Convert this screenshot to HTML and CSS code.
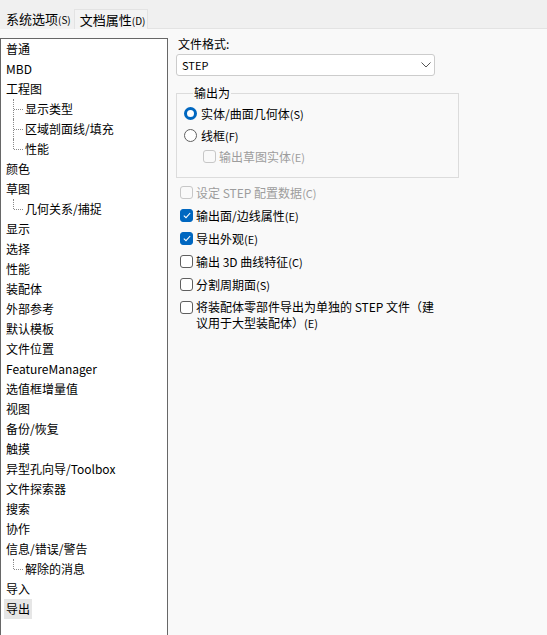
FILE: index.html
```html
<!DOCTYPE html>
<html lang="zh-CN">
<head>
<meta charset="utf-8">
<title>系统选项</title>
<link rel="stylesheet" href="styles.css">
</head>
<body>
<div class="window">
  <div class="tabbar">
    <div class="tab tab-active">系统选项<span class="acc">(S)</span></div>
    <div class="tab">文档属性<span class="acc">(D)</span></div>
  </div>
  <div class="main">
    <div class="tree">
      <div class="item">普通</div>
      <div class="item">MBD</div>
      <div class="item">工程图</div>
      <div class="item child">显示类型</div>
      <div class="item child">区域剖面线/填充</div>
      <div class="item child last">性能</div>
      <div class="item">颜色</div>
      <div class="item">草图</div>
      <div class="item child last">几何关系/捕捉</div>
      <div class="item">显示</div>
      <div class="item">选择</div>
      <div class="item">性能</div>
      <div class="item">装配体</div>
      <div class="item">外部参考</div>
      <div class="item">默认模板</div>
      <div class="item">文件位置</div>
      <div class="item">FeatureManager</div>
      <div class="item">选值框增量值</div>
      <div class="item">视图</div>
      <div class="item">备份/恢复</div>
      <div class="item">触摸</div>
      <div class="item">异型孔向导/Toolbox</div>
      <div class="item">文件探索器</div>
      <div class="item">搜索</div>
      <div class="item">协作</div>
      <div class="item">信息/错误/警告</div>
      <div class="item child last">解除的消息</div>
      <div class="item">导入</div>
      <div class="item"><span class="selected">导出</span></div>
    </div>
    <div class="panel">
      <div class="label">文件格式:</div>
      <div class="select">
        <span>STEP</span>
        <svg class="chev" width="10" height="6" viewBox="0 0 10 6"><path d="M0.5 0.5 L5 5 L9.5 0.5" fill="none" stroke="#555" stroke-width="1"/></svg>
      </div>
      <fieldset class="group">
        <legend>输出为</legend>
        <div class="row radio-row"><span class="radio on"></span><span>实体/曲面几何体<span class="acc">(S)</span></span></div>
        <div class="row radio-row"><span class="radio"></span><span>线框<span class="acc">(F)</span></span></div>
        <div class="row sub-row disabled"><span class="check"></span><span>输出草图实体<span class="acc">(E)</span></span></div>
      </fieldset>
      <div class="row check-row disabled"><span class="check"></span><span>设定 STEP 配置数据<span class="acc">(C)</span></span></div>
      <div class="row check-row"><span class="check on"><svg width="8" height="7" viewBox="0 0 8 7"><path d="M0.8 3.6 L3 5.6 L7.2 1" fill="none" stroke="#fff" stroke-width="1.1"/></svg></span><span>输出面/边线属性<span class="acc">(E)</span></span></div>
      <div class="row check-row"><span class="check on"><svg width="8" height="7" viewBox="0 0 8 7"><path d="M0.8 3.6 L3 5.6 L7.2 1" fill="none" stroke="#fff" stroke-width="1.1"/></svg></span><span>导出外观<span class="acc">(E)</span></span></div>
      <div class="row check-row"><span class="check"></span><span>输出 3D 曲线特征<span class="acc">(C)</span></span></div>
      <div class="row check-row"><span class="check"></span><span>分割周期面<span class="acc">(S)</span></span></div>
      <div class="row check-row multi"><span class="check"></span><span class="multi-text"><span class="line">将装配体零部件导出为单独的 STEP 文件（建</span><span class="line">议用于大型装配体）<span class="acc">(E)</span></span></span></div>
    </div>
  </div>
</div>
</body>
</html>
```
FILE: styles.css
```css
html, body {
  margin: 0;
  padding: 0;
  height: 100%;
  overflow: hidden;
}
body {
  font-family: "Noto Sans CJK SC", "Noto Sans", sans-serif;
  font-size: 12px;
  color: #000;
  background: #f9f9f9;
}
.window {
  display: flex;
  flex-direction: column;
  height: 100%;
}
.tabbar {
  height: 29px;
  flex: none;
  background: #f0f0f0;
  border-bottom: 1px solid #e3e3e3;
  box-sizing: border-box;
  display: flex;
  align-items: flex-end;
  gap: 0;
}
.tab {
  font-size: 13px;
  height: 20px;
  line-height: 19px;
  padding: 0 2px 0 5px;
  box-sizing: border-box;
  border: 1px solid #e3e3e3;
  border-bottom: none;
  background: #f3f3f3;
  margin-bottom: -1px;
}
.tab .acc {
  font-size: 10px;
}
.tab-active {
  height: 22px;
  line-height: 21px;
  border-color: transparent;
  background: #f0f0f0;
  padding: 0 2px 0 5px;
}
.acc {
  font-size: 11px;
}
.main {
  flex: 1;
  display: flex;
  min-height: 0;
}
.tree {
  width: 168px;
  flex: none;
  box-sizing: border-box;
  margin-top: 9px;
  border: 1px solid #676767;
  border-bottom: none;
  background: #fff;
  height: 597px;
  overflow: hidden;
}
.item {
  height: 20px;
  line-height: 20px;
  padding-left: 5px;
  white-space: nowrap;
  position: relative;
}
.item.child {
  padding-left: 24px;
}
.item.child::before {
  content: "";
  position: absolute;
  left: 12px;
  top: 0;
  height: 20px;
  border-left: 1px dotted #8a8a8a;
}
.item.child.last::before {
  height: 10px;
}
.item.child::after {
  content: "";
  position: absolute;
  left: 13px;
  top: 10px;
  width: 9px;
  border-top: 1px dotted #8a8a8a;
}
.selected {
  display: inline-block;
  background: #e6e6e6;
  margin-left: -2px;
  padding: 0 2px;
  height: 20px;
}
.panel {
  flex: 1;
  padding-left: 8px;
  padding-top: 7px;
}
.label {
  height: 16px;
  line-height: 16px;
  padding-left: 2px;
  margin-bottom: 2px;
}
.select {
  width: 259px;
  height: 22px;
  box-sizing: border-box;
  border: 1px solid #cccccc;
  border-radius: 3px;
  background: #fff;
  display: flex;
  align-items: center;
  justify-content: space-between;
  padding: 0 3px 0 5px;
  font-size: 11px;
}
.chev {
  display: block;
}
.group {
  margin: 9px 0 0 0;
  width: 283px;
  box-sizing: border-box;
  border: 1px solid #dcdcdc;
  padding: 1px 0 11px 7px;
}
.group legend {
  padding: 0 1px;
  margin-left: 9px;
  line-height: 16px;
  height: 16px;
}
.row {
  display: flex;
  align-items: center;
  height: 22px;
  white-space: nowrap;
}
.radio-row {
  gap: 4px;
}
.radio {
  width: 13px;
  height: 13px;
  box-sizing: border-box;
  border: 1px solid #616161;
  border-radius: 50%;
  background: #fff;
  flex: none;
}
.radio.on {
  border: 3.5px solid #0067c0;
  background: #fff;
}
.check {
  width: 13px;
  height: 13px;
  box-sizing: border-box;
  border: 1px solid #5f5f5f;
  border-radius: 3px;
  background: #fff;
  flex: none;
  display: flex;
  align-items: center;
  justify-content: center;
}
.check.on {
  background: #0067c0;
  border-color: #0067c0;
}
.sub-row {
  height: 20px;
  padding-left: 19px;
  gap: 3px;
}
.disabled {
  color: #9d9d9d;
}
.disabled .check {
  border-color: #c7c7c7;
  background: transparent;
}
.check-row {
  height: 23px;
  padding-left: 4px;
  gap: 3px;
}
.group + .check-row {
  margin-top: 3px;
}
.check-row.multi {
  align-items: flex-start;
  height: auto;
  padding-top: 3px;
}
.multi .check {
  margin-top: 2px;
}
.multi-text {
  display: flex;
  flex-direction: column;
}
.line {
  display: block;
  line-height: 16px;
  height: 16px;
}
```
